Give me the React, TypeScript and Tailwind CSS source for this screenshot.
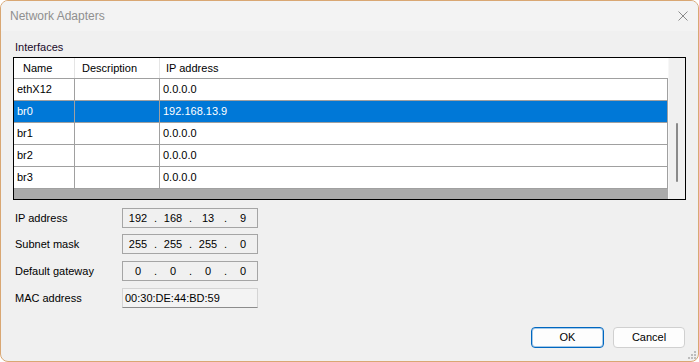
import React from 'react';

interface Iface {
  name: string;
  description: string;
  ip: string;
}

const interfaces: Iface[] = [
  { name: 'ethX12', description: '', ip: '0.0.0.0' },
  { name: 'br0', description: '', ip: '192.168.13.9' },
  { name: 'br1', description: '', ip: '0.0.0.0' },
  { name: 'br2', description: '', ip: '0.0.0.0' },
  { name: 'br3', description: '', ip: '0.0.0.0' },
];

const font = { fontFamily: '"Liberation Sans", Arial, sans-serif' };

const IpBox: React.FC<{ value: string[] }> = ({ value }) => (
  <div className="flex h-[20px] w-[136px] items-center border border-[#a5a5a5] pl-[3px] text-[11px] leading-[13px] text-black">
    {value.map((octet, i) => (
      <React.Fragment key={i}>
        {i > 0 && <span className="w-[11px] text-center">.</span>}
        <span className="w-[24px] text-center">{octet}</span>
      </React.Fragment>
    ))}
  </div>
);

const App: React.FC = () => {
  const selected = 1;

  return (
    <div className="h-[362px] w-[699px] bg-white" style={font}>
      <div className="relative flex h-full w-full flex-col overflow-hidden rounded-lg border border-[#d9a773] bg-[#f0f0f0]">
        {/* title bar */}
        <div className="flex h-[30px] shrink-0 items-center justify-between bg-[#f3f3f3] pl-[9px] pr-[9px]">
          <span className="text-[12px] leading-[14px] text-[#8f8f8f]">Network Adapters</span>
          <svg width="10" height="10" viewBox="0 0 10 10" className="mr-[1px]">
            <path d="M0.5 0.5 L9.5 9.5 M9.5 0.5 L0.5 9.5" stroke="#8a8a8a" strokeWidth="1" fill="none" />
          </svg>
        </div>

        <div className="flex flex-1 flex-col px-[12px] pt-[10px]">
          <div className="pl-[2px] text-[11px] leading-[13px] text-[#1a0a2a]">Interfaces</div>

          {/* list view */}
          <div className="mt-[3px] flex h-[143px] border border-black bg-[#f0f0f0]">
            <div className="flex w-[654px] flex-col">
              <div className="flex h-[21px] border-b border-[#a0a0a0] bg-white text-[11px] leading-[13px] text-black">
                <div className="w-[61px] border-r border-[#e5e5e5] pl-[9px] pt-[4px]">Name</div>
                <div className="w-[85px] border-r border-[#e5e5e5] pl-[7px] pt-[4px]">Description</div>
                <div className="flex-1 pl-[6px] pt-[4px]">IP address</div>
              </div>
              {interfaces.map((row, i) => {
                const isSel = i === selected;
                return (
                  <div
                    key={row.name}
                    className={`flex h-[22px] border-b border-r border-[#a0a0a0] text-[11px] leading-[13px] ${
                      isSel ? 'bg-[#0078d7] text-white' : 'bg-white text-black'
                    }`}
                  >
                    <div className="flex w-[61px] items-center border-r border-[#a0a0a0] pl-[3px]">{row.name}</div>
                    <div className="flex w-[85px] items-center border-r border-[#a0a0a0] pl-[3px]">{row.description}</div>
                    <div className="flex flex-1 items-center pl-[3px]">{row.ip}</div>
                  </div>
                );
              })}
              <div className="flex-1 bg-[#ababab]" />
            </div>
            {/* thin scrollbar */}
            <div className="flex w-[17px] flex-col items-center border-l border-[#f7f7f7] bg-[#f0f0f0] pt-[65px]">
              <div className="h-[59px] w-[2px] rounded-full bg-[#8a8a8a]" />
            </div>
          </div>

          {/* address fields */}
          <div className="mt-[8px] flex flex-col pl-[2px] text-[11px] leading-[13px] text-black">
            <div className="flex items-center">
              <span className="w-[107px]">IP address</span>
              <IpBox value={['192', '168', '13', '9']} />
            </div>
            <div className="mt-[6px] flex items-center">
              <span className="w-[107px]">Subnet mask</span>
              <IpBox value={['255', '255', '255', '0']} />
            </div>
            <div className="mt-[7px] flex items-center">
              <span className="w-[107px]">Default gateway</span>
              <IpBox value={['0', '0', '0', '0']} />
            </div>
            <div className="mt-[7px] flex items-center">
              <span className="w-[107px]">MAC address</span>
              <div className="flex h-[20px] w-[136px] items-center border border-[#d4d4d4] border-b-[#8c8c8c] bg-[#f3f3f3] pl-[2px]">
                00:30:DE:44:BD:59
              </div>
            </div>
          </div>

          {/* buttons */}
          <div className="mt-[19px] flex justify-end gap-[9px] pr-[1px]">
            <button className="h-[21px] w-[73px] rounded-[4px] border border-[#0067c0] bg-[#fdfdfd] text-[11px] leading-[13px] text-black shadow-[inset_0_0_0_1px_rgba(0,103,192,0.35)]">
              OK
            </button>
            <button className="h-[21px] w-[72px] rounded-[4px] border border-[#d0d0d0] bg-[#fdfdfd] text-[11px] leading-[13px] text-black">
              Cancel
            </button>
          </div>
        </div>

        {/* resize grip */}
        <svg width="8" height="8" viewBox="0 0 8 8" className="absolute bottom-[2px] right-[2px]">
          <rect x="6" y="0" width="2" height="2" fill="#bdbdbd" />
          <rect x="3" y="3" width="2" height="2" fill="#bdbdbd" />
          <rect x="6" y="3" width="2" height="2" fill="#bdbdbd" />
          <rect x="0" y="6" width="2" height="2" fill="#bdbdbd" />
          <rect x="3" y="6" width="2" height="2" fill="#bdbdbd" />
          <rect x="6" y="6" width="2" height="2" fill="#bdbdbd" />
        </svg>
      </div>
    </div>
  );
};

export default App;
